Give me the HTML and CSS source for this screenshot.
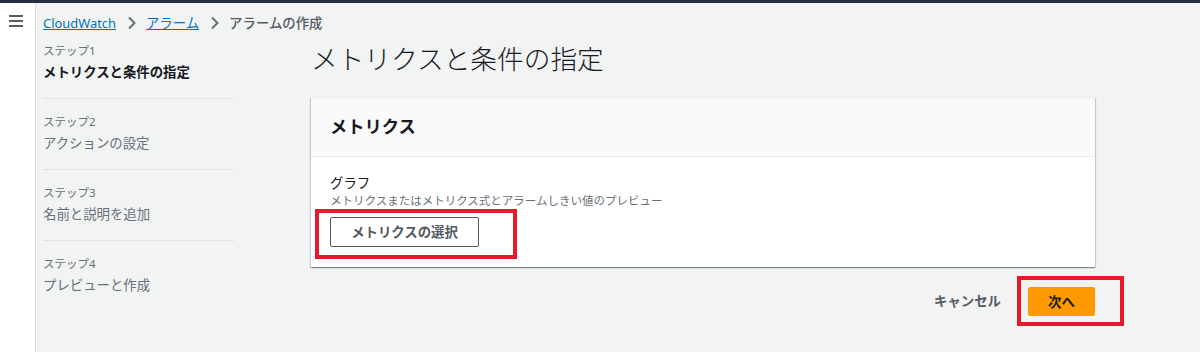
FILE: index.html
```html
<!DOCTYPE html>
<html lang="ja">
    <head>
        <meta charset="utf-8">
        <title>アラームの作成 - CloudWatch</title>
        <link rel="stylesheet" href="styles.css">
    </head>
    <body>
        <div class="topbar"></div>
        <div class="page">
            <div class="sidestrip">
                <svg class="hamburger" width="14" height="12" viewBox="0 0 14 12">
                    <rect x="0" y="0" width="14" height="2"/>
                    <rect x="0" y="5" width="14" height="2"/>
                    <rect x="0" y="10" width="14" height="2"/>
                </svg>
            </div>
            <div class="main">
                <div class="breadcrumbs">
                    <a href="#" class="crumb-link crumb-latin">CloudWatch</a>
                    <svg class="chevron" width="10" height="14" viewBox="0 0 10 14">
                        <path d="M2 1.5l5.5 5.5-5.5 5.5"/>
                    </svg>
                    <a href="#" class="crumb-link">アラーム</a>
                    <svg class="chevron" width="10" height="14" viewBox="0 0 10 14">
                        <path d="M2 1.5l5.5 5.5-5.5 5.5"/>
                    </svg>
                    <span class="crumb-current">アラームの作成</span>
                </div>
                <div class="layout">
                    <ul class="steps">
                        <li class="step step-active">
                            <div class="step-label">ステップ1</div>
                            <div class="step-name">メトリクスと条件の指定</div>
                        </li>
                        <li class="step">
                            <div class="step-label">ステップ2</div>
                            <div class="step-name">アクションの設定</div>
                        </li>
                        <li class="step">
                            <div class="step-label">ステップ3</div>
                            <div class="step-name">名前と説明を追加</div>
                        </li>
                        <li class="step">
                            <div class="step-label">ステップ4</div>
                            <div class="step-name">プレビューと作成</div>
                        </li>
                    </ul>
                    <div class="content">
                        <h1 class="page-title">メトリクスと条件の指定</h1>
                        <div class="card">
                            <div class="card-header">メトリクス</div>
                            <div class="card-body">
                                <div class="field-label">グラフ</div>
                                <div class="field-desc">メトリクスまたはメトリクス式とアラームしきい値のプレビュー</div>
                                <span class="marked">
                                    <button class="btn btn-normal">メトリクスの選択</button>
                                    <span class="mark mark-select"></span>
                                </span>
                            </div>
                        </div>
                        <div class="actions">
                            <button class="btn btn-link">キャンセル</button>
                            <span class="marked">
                                <button class="btn btn-primary">次へ</button>
                                <span class="mark mark-next"></span>
                            </span>
                        </div>
                    </div>
                </div>
            </div>
        </div>
    </body>
</html>
```

FILE: styles.css
```css
* {
box-sizing: border-box;
}
html, body {
margin: 0;
padding: 0;
}
body {
height: 352px;
overflow: hidden;
background-color: #f2f3f3;
font-family: "Noto Sans", "Noto Sans CJK JP", sans-serif;
color: #16191f;
}
.topbar {
height: 3px;
background-color: #232f3e;
}
.page {
display: flex;
height: 349px;
}
.sidestrip {
flex: 0 0 36px;
background-color: #fff;
border-right: 1px solid #d5dbdb;
padding: 12px 0 0 9px;
}
.hamburger {
display: block;
fill: #545b64;
}
.main {
flex: 1;
padding-left: 7px;
}
.breadcrumbs {
display: flex;
align-items: center;
height: 20px;
margin-top: 10px;
font-size: 13.4px;
line-height: 20px;
}
.crumb-link {
color: #0073bb;
text-decoration: underline;
}
.crumb-latin {
font-size: 12.9px;
}
.chevron {
margin: 0 9px 0 11px;
fill: none;
stroke: #687078;
stroke-width: 2;
}
.crumb-current {
color: #545b64;
font-weight: 500;
}
.layout {
display: flex;
}
.steps {
list-style: none;
margin: 0;
padding: 0;
width: 191px;
margin-top: 10px;
}
.step {
padding: 15px 0 16px;
border-bottom: 1px solid #dfe3e3;
}
.step:first-child {
padding-top: 0;
}
.step:last-child {
border-bottom: none;
}
.step-label {
font-size: 11.5px;
line-height: 16px;
color: #687078;
}
.step-name {
margin-top: 3px;
font-size: 13.4px;
line-height: 20px;
color: #687078;
}
.step-active .step-name {
color: #16191f;
font-weight: 700;
}
.content {
width: 784px;
margin-left: 77px;
padding-top: 8px;
}
.page-title {
margin: 0 0 20px;
font-size: 26.7px;
font-weight: 300;
line-height: 36px;
color: #16191f;
}
.card {
background-color: #fff;
border-top: 1px solid #eaeded;
box-shadow: 0 1px 1px 0 rgba(0, 28, 36, 0.3), 1px 1px 1px 0 rgba(0, 28, 36, 0.15), -1px 1px 1px 0 rgba(0, 28, 36, 0.15);
}
.card-header {
background-color: #fafafa;
border-bottom: 1px solid #eaeded;
padding: 17px 19px 17px;
font-size: 17.3px;
font-weight: 700;
line-height: 24px;
}
.card-body {
padding: 16px 19px 20px;
}
.field-label {
font-size: 13.4px;
line-height: 20px;
color: #16191f;
}
.field-desc {
font-size: 11.5px;
line-height: 16px;
color: #687078;
margin-bottom: 8px;
}
.btn {
font-family: inherit;
font-weight: 700;
font-size: 13.4px;
line-height: 20px;
border-radius: 2px;
cursor: pointer;
}
.btn-normal {
height: 30px;
width: 149px;
padding: 4px 0;
color: #545b64;
background-color: #fff;
border: 1px solid #545b64;
}
.btn-link {
padding: 4px 20px;
color: #545b64;
background: none;
border: 1px solid transparent;
}
.btn-primary {
height: 29px;
width: 67px;
padding: 4px 0;
color: #16191f;
background-color: #ff9900;
border: 1px solid #ff9900;
}
.actions {
display: flex;
justify-content: flex-end;
align-items: center;
margin-top: 19px;
}
.actions .btn-link {
margin-right: 6px;
}
.marked {
position: relative;
display: inline-block;
}
.marked .btn {
display: block;
}
/* red annotation frames drawn over the screenshot */
.mark {
position: absolute;
border: 4px solid #e8192c;
pointer-events: none;
}
.mark-select {
left: -15px;
top: -8px;
right: -38px;
bottom: -12px;
}
.mark-next {
left: -11px;
top: -11px;
right: -29px;
bottom: -10px;
}
```
